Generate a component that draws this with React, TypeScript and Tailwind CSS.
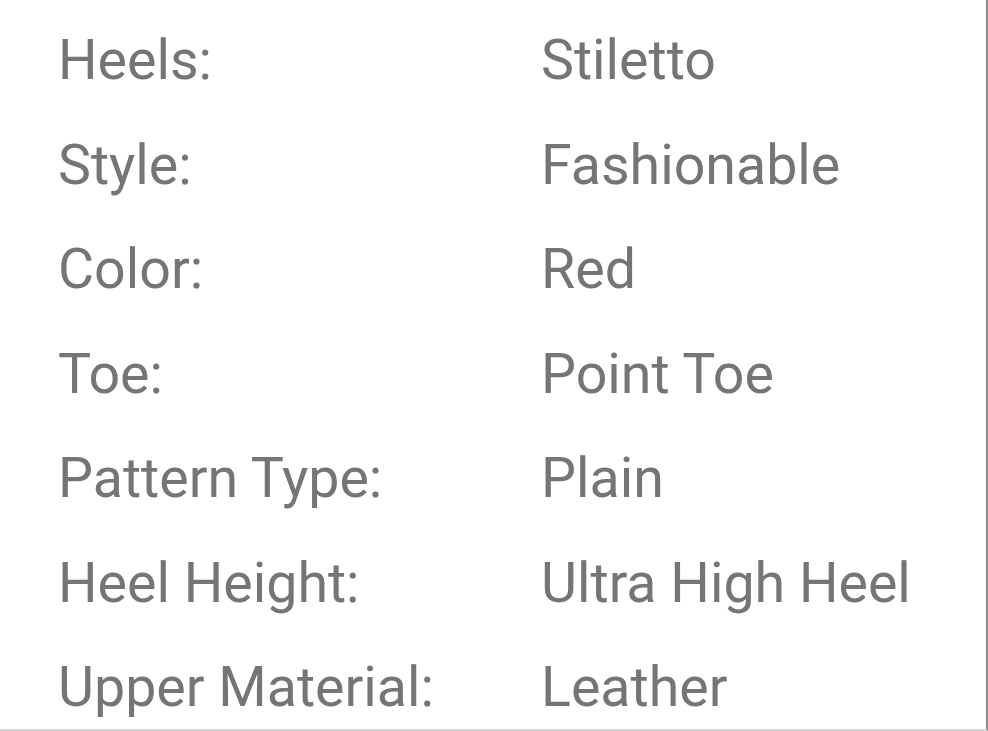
const rows: [string, string][] = [
  ["Heels:", "Stiletto"],
  ["Style:", "Fashionable"],
  ["Color:", "Red"],
  ["Toe:", "Point Toe"],
  ["Pattern Type:", "Plain"],
  ["Heel Height:", "Ultra High Heel"],
  ["Upper Material:", "Leather"],
];

export default function App() {
  return (
    <div className="w-[988px] h-[731px] bg-white overflow-hidden">
      <div className="h-[731px] w-[988px] border-r-2 border-b-2 border-r-[#8a8a8a] border-b-[#d6d6d6] bg-white pt-[9px] font-['Roboto',sans-serif] text-[#757575]">
        {rows.map(([label, value]) => (
          <div key={label} className="flex h-[104.5px] items-center text-[55.5px] leading-[104.5px]">
            <span className="w-[541px] pl-[58px] shrink-0">{label}</span>
            <span>{value}</span>
          </div>
        ))}
      </div>
    </div>
  );
}
